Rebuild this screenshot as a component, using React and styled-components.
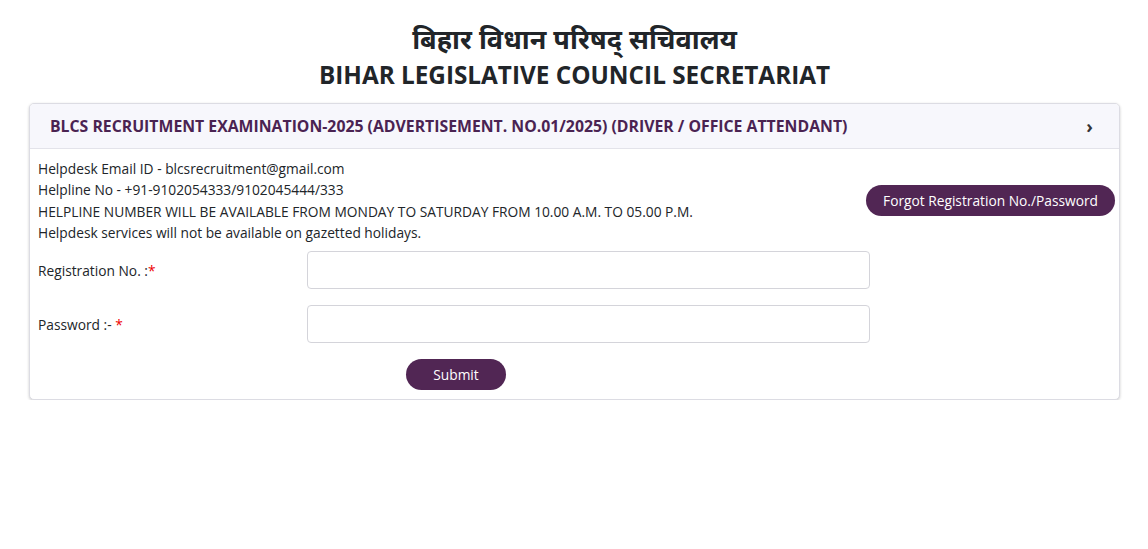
import React from "react";
import styled, { createGlobalStyle } from "styled-components";

const GlobalStyle = createGlobalStyle`
  body {
    margin: 0;
    background: #ffffff;
    font-family: "Open Sans", "Noto Sans", "Noto Sans Devanagari", sans-serif;
    color: #212529;
  }
`;

const Page = styled.div`
  padding: 20px 28px 0 29px;
`;

const Heading = styled.header`
  text-align: center;
  color: #212529;
  margin-bottom: 11px;
`;

const HindiTitle = styled.h1`
  margin: 0;
  font-size: 27px;
  line-height: 38px;
  font-weight: 700;
`;

const EnglishTitle = styled.h2`
  margin: 0;
  font-size: 24.3px;
  line-height: 34px;
  font-weight: 700;
`;

const Card = styled.section`
  border: 1px solid #dcdce3;
  border-radius: 5px;
  box-shadow: 0 1px 3px rgba(0, 0, 0, 0.2);
  background: #fff;
  overflow: hidden;
`;

const CardHeader = styled.div`
  display: flex;
  align-items: center;
  justify-content: space-between;
  height: 44px;
  padding: 0 26px 0 20px;
  background: #f7f7fc;
  border-bottom: 1px solid #e3e3ea;
  color: #4a2352;
  font-weight: 700;
  font-size: 15.8px;
`;

const Chevron = styled.span`
  font-size: 18px;
  font-weight: 700;
  color: #333;
`;

const CardBody = styled.div`
  padding: 9px 4px 9px 8px;
`;

const InfoRow = styled.div`
  display: flex;
  align-items: center;
  justify-content: space-between;
`;

const InfoText = styled.div`
  font-size: 13.75px;
  line-height: 21.3px;
`;

const PillButton = styled.button`
  border: none;
  border-radius: 16px;
  background: #512654;
  color: #fff;
  font-family: inherit;
  font-size: 13.75px;
  height: 31px;
  padding: 0 ${(p) => p.$pad}px;
  cursor: pointer;
`;

const Form = styled.form`
  display: grid;
  grid-template-columns: 269px 563px;
  row-gap: 16px;
  margin-top: 8px;
  align-items: center;
`;

const Label = styled.label`
  font-size: 13.75px;
`;

const Star = styled.span`
  color: #e00;
`;

const Input = styled.input`
  height: 38px;
  box-sizing: border-box;
  border: 1px solid #d4d4da;
  border-radius: 4px;
`;

const SubmitCell = styled.div`
  grid-column: 1 / 3;
  display: flex;
  justify-content: center;
  padding-left: 4px;
`;

export default function App() {
  return (
    <>
      <GlobalStyle />
      <Page>
        <Heading>
          <HindiTitle>बिहार विधान परिषद् सचिवालय</HindiTitle>
          <EnglishTitle>BIHAR LEGISLATIVE COUNCIL SECRETARIAT</EnglishTitle>
        </Heading>
        <Card>
          <CardHeader>
            <span>
              BLCS RECRUITMENT EXAMINATION-2025 (ADVERTISEMENT. NO.01/2025)
              (DRIVER / OFFICE ATTENDANT)
            </span>
            <Chevron>›</Chevron>
          </CardHeader>
          <CardBody>
            <InfoRow>
              <InfoText>
                <div>Helpdesk Email ID - blcsrecruitment@gmail.com</div>
                <div>Helpline No - +91-9102054333/9102045444/333</div>
                <div>
                  HELPLINE NUMBER WILL BE AVAILABLE FROM MONDAY TO SATURDAY
                  FROM 10.00 A.M. TO 05.00 P.M.
                </div>
                <div>Helpdesk services will not be available on gazetted holidays.</div>
              </InfoText>
              <PillButton type="button" $pad={17}>
                Forgot Registration No./Password
              </PillButton>
            </InfoRow>
            <Form onSubmit={(e) => e.preventDefault()}>
              <Label>
                Registration No. :<Star>*</Star>
              </Label>
              <Input type="text" />
              <Label>
                Password :- <Star>*</Star>
              </Label>
              <Input type="password" />
              <SubmitCell>
                <PillButton type="submit" $pad={27}>
                  Submit
                </PillButton>
              </SubmitCell>
            </Form>
          </CardBody>
        </Card>
      </Page>
    </>
  );
}
